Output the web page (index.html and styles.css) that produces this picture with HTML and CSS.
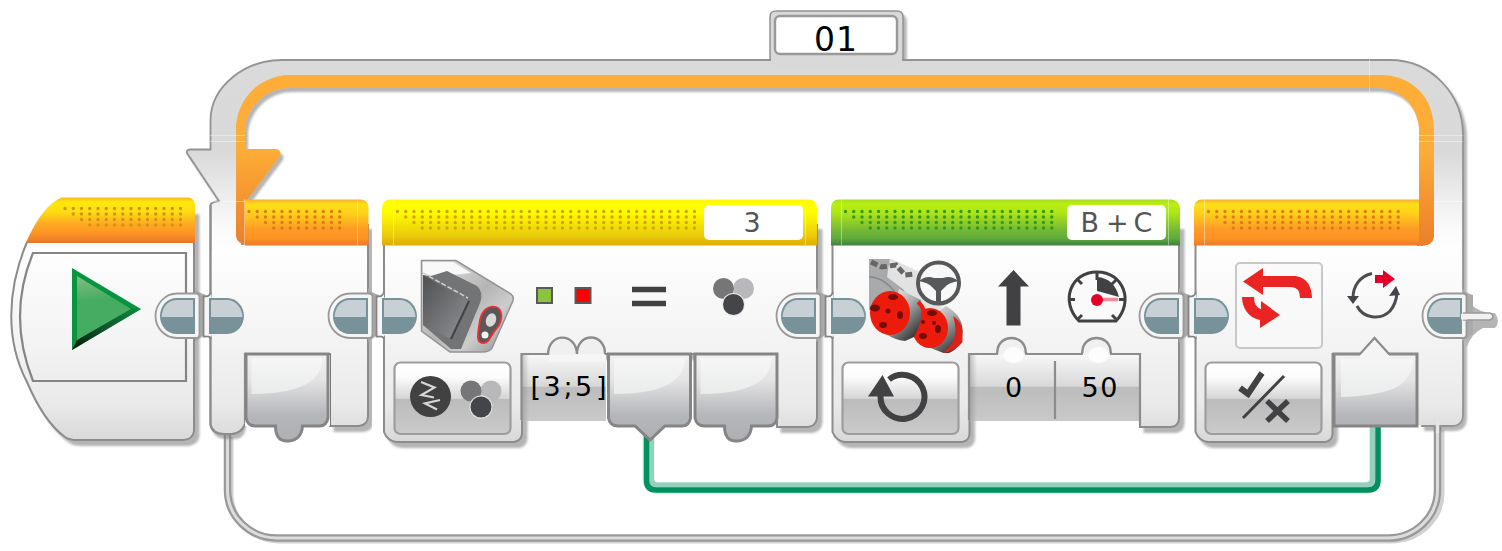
FILE: index.html
```
<!DOCTYPE html>
<html lang="en">
<head>
<meta charset="utf-8">
<title>Loop program</title>
<link rel="stylesheet" href="styles.css">
</head>
<body>
<main class="program">
<svg class="canvas" viewBox="0 0 1502 551" width="1502" height="551">
<defs>
  <linearGradient id="body" gradientUnits="userSpaceOnUse" x1="0" y1="245" x2="0" y2="442"><stop offset="0" stop-color="#fff"/><stop offset=".5" stop-color="#f3f3f3"/><stop offset=".8" stop-color="#eaeaea"/><stop offset="1" stop-color="#d8d8d8"/></linearGradient>
  <linearGradient id="strip" gradientUnits="userSpaceOnUse" x1="0" y1="60" x2="0" y2="440"><stop offset="0" stop-color="#dadada"/><stop offset=".24" stop-color="#d9d9d9"/><stop offset=".44" stop-color="#fafafa"/><stop offset=".52" stop-color="#fff"/><stop offset=".75" stop-color="#f2f2f2"/><stop offset="1" stop-color="#dadada"/></linearGradient>
  <linearGradient id="orange" x2="0" y2="1"><stop offset="0" stop-color="#fdab2d"/><stop offset=".1" stop-color="#fee017"/><stop offset=".3" stop-color="#fed01a"/><stop offset=".65" stop-color="#fe9a26"/><stop offset=".85" stop-color="#fd9225"/><stop offset="1" stop-color="#e87a2c"/></linearGradient>
  <linearGradient id="start" x2="0" y2="1"><stop offset="0" stop-color="#fcb41c"/><stop offset=".1" stop-color="#ffe80c"/><stop offset=".3" stop-color="#fede13"/><stop offset=".6" stop-color="#fea624"/><stop offset=".8" stop-color="#fd9225"/><stop offset="1" stop-color="#e7762c"/></linearGradient>
  <linearGradient id="yellow" x2="0" y2="1"><stop offset="0" stop-color="#fff700"/><stop offset=".1" stop-color="#ff0"/><stop offset=".3" stop-color="#fffa00"/><stop offset=".8" stop-color="#e8c90b"/><stop offset="1" stop-color="#e0ab00"/></linearGradient>
  <linearGradient id="lime" x2="0" y2="1"><stop offset="0" stop-color="#a9dc1d"/><stop offset=".1" stop-color="#b8ef12"/><stop offset=".28" stop-color="#afe615"/><stop offset=".65" stop-color="#77bb35"/><stop offset=".85" stop-color="#5eaa3c"/><stop offset="1" stop-color="#417f3f"/></linearGradient>
  <linearGradient id="track" gradientUnits="userSpaceOnUse" x1="0" y1="75" x2="0" y2="245"><stop offset="0" stop-color="#fdad38"/><stop offset=".45" stop-color="#fdac37"/><stop offset=".75" stop-color="#f3932f"/><stop offset="1" stop-color="#eb7f2c"/></linearGradient>
  <linearGradient id="btn" x2="0" y2="1"><stop offset="0" stop-color="#fff"/><stop offset=".2" stop-color="#fcfcfc"/><stop offset=".5" stop-color="#d6d6d6"/><stop offset=".52" stop-color="#bbb"/><stop offset="1" stop-color="#cbcbcb"/></linearGradient>
  <linearGradient id="val" x2="0" y2="1"><stop offset="0" stop-color="#f8f8f8"/><stop offset=".48" stop-color="#d8d8d8"/><stop offset=".5" stop-color="#bcbcbc"/><stop offset="1" stop-color="#c9c9c9"/></linearGradient>
  <linearGradient id="edge"><stop offset="0" stop-color="#777" stop-opacity=".4"/><stop offset="1" stop-color="#777" stop-opacity="0"/></linearGradient>
  <linearGradient id="port" gradientUnits="userSpaceOnUse" x1="0" y1="353" x2="0" y2="442"><stop offset="0" stop-color="#f2f2f2"/><stop offset=".3" stop-color="#e4e4e4"/><stop offset=".7" stop-color="#b5b6ba"/><stop offset="1" stop-color="#aeafb3"/></linearGradient>
  <linearGradient id="gloss" x2="0" y2="1"><stop offset="0" stop-color="#f6f6f6"/><stop offset="1" stop-color="#eaebeb"/></linearGradient>
  <linearGradient id="face" x2="1" y2="1"><stop offset="0" stop-color="#4f5052"/><stop offset="1" stop-color="#929396"/></linearGradient>
  <linearGradient id="shell" x2="1" y2="1"><stop offset="0" stop-color="#e8e8e8"/><stop offset=".5" stop-color="#b5b5b5"/><stop offset=".7" stop-color="#ccc"/><stop offset="1" stop-color="#8b8b8b"/></linearGradient>
  <linearGradient id="metal" x2=".7" y2="1"><stop offset="0" stop-color="#fafafa"/><stop offset=".5" stop-color="#aaa"/><stop offset="1" stop-color="#333"/></linearGradient>
  <linearGradient id="go" x1=".1" x2=".2" y2="1"><stop offset="0" stop-color="#7fbe80"/><stop offset=".4" stop-color="#46ac61"/><stop offset="1" stop-color="#44ac62"/></linearGradient>
  <linearGradient id="goEdge" gradientUnits="userSpaceOnUse" x1="140" y1="309" x2="72" y2="350"><stop offset="0" stop-color="#0a8c3c"/><stop offset=".5" stop-color="#12552b"/><stop offset="1" stop-color="#061c0d"/></linearGradient>
  <filter id="shadow" x="-5%" y="-5%" width="112%" height="112%"><feDropShadow dx="4.500" dy="5" stdDeviation=".9" flood-color="#777" flood-opacity=".55"/></filter>
  <filter id="trackShadow" filterUnits="userSpaceOnUse" x="160" y="0" width="1342" height="551"><feDropShadow dx="3" dy="4" stdDeviation=".8" flood-color="#777" flood-opacity=".55"/></filter>
  <clipPath id="motorClip"><rect x="869" y="259" width="93.500" height="94"/></clipPath>

  <g id="outlet">
    <path d="M40 -5Q43 0 51 2V40Q46 45 40 49Z" fill="#aaa"/>
    <path class="socket" d="M22 .5H41Q44.500 .5 44.500 4V41Q44.500 45 41 45H22C10 45 .5 35 .5 23S10 .5 22 .5Z"/>
    <path d="M22 5H40V41H22C12 41 5 33 5 23S12 5 22 5Z" fill="#779299"/>
    <path d="M22 7H38V24H6.500C7 14 13 7 22 7Z" fill="#c6d0d5"/>
  </g>
  <g id="inlet">
    <path class="socket inlet-edge" d="M9 -1Q8 3 4 3.500H1.500V43.500H4Q8 43 9 46" />
    <rect x="3" y="4.500" width="9" height="38" fill="#f5f5f5"/>
    <path d="M7 5H25C35 5 42 14 42 23S35 41 25 41H7Z" fill="#779299"/>
    <path d="M9 7H25C34 7 40 15 40.500 24H9Z" fill="#c6d0d5"/>
  </g>
  <g id="outRound">
    <path class="port" d="M2.500 354H84.500V418Q83 426 76 426H59Q58 440 45 441T32 426H12Q4 426 2.500 418Z"/>
    <path class="gloss" d="M8 358H79Q79 376 61 385Q43 394 8 394Z"/>
  </g>
  <g id="outPoint">
    <path class="port" d="M2.500 354H84.500V418Q83 426 76 426H59L44 440L29 426H12Q4 426 2.500 418Z"/>
    <path class="gloss" d="M8 358H79Q79 376 61 385Q43 394 8 394Z"/>
  </g>
  <g id="bump"><path class="bump" d="M-15 354.500Q-14 353 -14 350C-12 334 12 334 14 350Q14 353 15 354.500"/><ellipse cx="2" cy="355" rx="10" ry="8" fill="#fff" opacity=".8"/></g>
  <g id="colors"><circle cx="31" cy="11" r="10.500" fill="#b8b8ba"/><circle cx="11" cy="11" r="10.500" fill="#767678"/><circle cx="21" cy="27" r="11.500" fill="#e8e8e8"/><circle cx="21" cy="27" r="10.500" fill="#444548"/></g>
</defs>

<!-- return line and data wire -->
<path class="return-shadow" d="M231 437V493A49 48 0 0 0 280 541H1391A51 48 0 0 0 1442 493V430"/>
<path class="return-edge" d="M227.500 434V490A49.500 48 0 0 0 277 538H1388A49.500 48 0 0 0 1437.500 490V426"/>
<path class="return-core" d="M227.500 434V490A49.500 48 0 0 0 277 538H1388A49.500 48 0 0 0 1437.500 490V426"/>
<path class="wire-halo" d="M648.500 430V478Q648.500 488 658.500 488H1364Q1375 488 1375 478V427"/>
<path class="wire-light" d="M651.500 430V479Q651.500 485 658 485H1366Q1372.500 485 1372.500 479V427"/>
<path class="wire-dark" d="M646.500 430V480Q646.500 490 656 490H1368Q1378 490 1378 480V427"/>

<!-- start block -->
<g filter="url(#shadow)">
  <path class="block" d="M27 242C6 292 6 342 27 382Q44 422 65 437Q69 440 77 440H184Q193 439 194 431V210H60Z"/>
</g>
<path class="screen" d="M33 253H186V381H33Q7 316 33 253Z"/>
<path d="M26 243C36 219 49 202 62 197.500H188Q195 198 195 205V243Z" fill="url(#start)"/>
<path d="M72 268L141 309L72 350Z" fill="#0b9440"/><path d="M72 350L141 309L129 308L77 340Z" fill="url(#goEdge)"/><path d="M77 276L131 309L77 340Z" fill="url(#go)"/>
<g class="dots start-dots"><path d="M65 208.500H182"/><path d="M73.250 214H182"/><path d="M81.500 219.500H182"/><path d="M89.750 225H182"/></g>

<!-- loop frame -->
<g filter="url(#trackShadow)">
  <path d="M770 61V17Q770 11 776 11H897Q903 11 903 17V61Z" fill="#d9d9d9" stroke="#929292" stroke-width="1.500"/>
  <path class="frame" d="M210.500 205Q211 202 219 201L187 153Q186 150 190 149.500H210.500V120C211 86 245 60 282 60H1390C1432 60 1463 95 1463 135V416Q1462 426 1452 426H1422V128C1420 103 1401 83 1376 83H290C262 83 242 108 242 130V424Q240 434 233 434H224Q212 434 210.500 425Z"/>
  <path d="M236 250V125C239 95 263 75 290 75H1380C1412 75 1434 97 1434 130V236Q1433 245 1424 245H1419V128C1417 106 1401 88 1376 88H290C265 88 245 108 245 132V149H276Q282 150 280 156L247 200V245Q237 244 236 236Z" fill="url(#track)"/>
</g>
<path d="M771 58H902V67H771Z" fill="#d9d9d9"/>
<rect class="name-box" x="775" y="16" width="122" height="38" rx="5"/>
<path class="seam" d="M210 135.500H245M210 141.500H245M1419 135.500H1463M1419 141.500H1463M210 201.500H245M1419 201.500H1463M1369.500 59V92"/>

<!-- loop entry -->
<g filter="url(#shadow)"><path class="block" d="M330 353V426H359Q368 425 368 416V225H320V353Z"/></g>
<path d="M237 245H366V353H329V425H245V353H237Z" fill="url(#body)"/>
<path d="M330 354V426" class="port-line"/>
<path d="M245 199.500H361Q368 200 368.500 207V245.500H245Z" fill="url(#orange)"/>
<path class="seam" d="M244.500 199V245M357.500 199V245"/>
<path d="M211.500 250H244V424Q240 433 233 433H224Q213 433 211.500 425Z" fill="url(#body)"/>
<path class="outline" d="M210.500 205V425Q213 434 224 434H232Q242 433 245 424V353"/>
<path d="M245 355H330V426H245Z" fill="#fff"/>
<use href="#outRound" x="243.500"/>
<g class="dots orange-dots"><path d="M249 211.500H345"/><path d="M257.250 217H345"/><path d="M265.500 222.500H345"/><path d="M273.750 228H345"/></g>

<!-- compare block -->
<g filter="url(#shadow)"><path class="block" d="M384 230V432Q387 441 397 442H514Q521 441 522 434V354H777V427H808Q816 426 817 418V225Z"/></g>
<path d="M382 245.500V208Q382 199.500 391 199.500H809Q817 200 817 208V245.500Z" fill="url(#yellow)"/>
<g class="dots yellow-dots"><path d="M397.500 211.500H695"/><path d="M405.750 217H695"/><path d="M414 222.500H695"/><path d="M422.250 228H695"/></g>
<path class="seam" d="M393.500 199V245M805.500 199V245"/>
<rect x="704" y="205" width="99" height="35" rx="5" fill="#fff"/>
<rect x="522" y="354" width="84" height="67" fill="url(#val)"/><rect x="522" y="354" width="7" height="67" fill="url(#edge)"/>
<path class="outline" d="M521.500 420V354H549M604 354H607"/>
<path d="M549 362Q549 338 563 338T577 350Q578 338 592 338T605 362Z" fill="#f6f6f6"/>
<path class="bump" d="M548 355C548 332 576 332 577 354C577 332 605 332 605 354"/>
<use href="#outPoint" x="606"/><use href="#outRound" x="692.500"/>
<g>
  <path d="M421.500 260.500H456L511 294Q515 297 512 303L492 348Q490 352 482 352H450L421.500 331Z" fill="url(#shell)" stroke="#929292" stroke-width="1.500"/>
  <path d="M423 262H453L471 273L444 276L423 275Z" fill="#f8f8f8"/>
  <path d="M431 276L447 271L477 286Q484 292 480 303L461 349H451L423 325V275Z" fill="#737476"/>
  <path d="M423 275L469 301L451 339L423 325Z" fill="url(#face)"/>
  <path d="M469 301L451 339" stroke="#414244" stroke-width="2"/>
  <path d="M423 273L468 298" stroke="#d0d0d0" stroke-width="1.500" stroke-dasharray="5 2"/>
  <path d="M480 320C482 310 489 305 496 307C503 309 503 321 497 328C490 336 490 342 484 343C475 344 478 332 480 320Z" fill="#5c5659" stroke="#f03030" stroke-width="1.800"/>
  <ellipse cx="491" cy="320" rx="5" ry="7" fill="#d8d8d8" transform="rotate(20 491 320)"/><circle cx="485" cy="335" r="3.500" fill="#f4f4f4"/>
</g>
<rect class="button" x="394.500" y="362.500" width="116" height="71.500" rx="6"/>
<circle cx="430.500" cy="396.500" r="20.500" fill="#414141"/><path d="M421 382L434.500 387.500L421.500 395L434 397.500M440 400L425 403.500L437 409.500" fill="none" stroke="#d7d7d7" stroke-width="2.200"/>
<use href="#colors" x="460" y="380"/>
<rect x="537" y="288" width="15" height="15" fill="#8bc33f" stroke="#58595b" stroke-width="2"/>
<rect x="575.500" y="288" width="15" height="15" fill="#f00" stroke="#58595b" stroke-width="2"/>
<path d="M632 289.500H666M632 303.500H666" stroke="#414144" stroke-width="5.500"/>
<use href="#colors" x="712.500" y="277.500"/>

<!-- steering block -->
<g filter="url(#shadow)"><path class="block" d="M832.500 230V432Q836 441 845 442H962Q969 441 969.500 434V354H1140V427H1171Q1179 426 1179 418V225Z"/></g>
<path d="M831 245.500V208Q831 199.500 839 199.500H1171Q1179 200 1180 208V245.500Z" fill="url(#lime)"/>
<g class="dots green-dots"><path d="M845.500 211.500H1058"/><path d="M853.750 217H1058"/><path d="M862 222.500H1058"/><path d="M870.250 228H1058"/></g>
<path class="seam" d="M841.500 199V245M1168.500 199V245"/>
<rect x="1067" y="205" width="99" height="35" rx="5" fill="#fff"/>
<rect x="970" y="354" width="169" height="67" fill="url(#val)"/><rect x="970" y="354" width="7" height="67" fill="url(#edge)"/>
<path class="outline" d="M969 420V354H998M1025 354H1083M1110 354H1140V425M1055 361V419"/>
<use href="#bump" x="1011.500"/><use href="#bump" x="1096.500"/>
<g clip-path="url(#motorClip)">
  <path d="M869 259H890L930 285L914 315L869 310Z" fill="#a9aaac"/><path d="M869 277Q887 277 900 300" fill="none" stroke="#888" stroke-width="1.500"/>
  <path d="M890 258L932 278L942 308L922 318L903 289L887 277Z" fill="#e2e2e2"/>
  <path d="M871 262L882 267L896 265L905 275L914 274" fill="none" stroke="#666" stroke-width="5" stroke-dasharray="7 3"/>
  <path d="M920 323L946 306Q962 315 963 331Q961 350 946 354L923 345Z" fill="url(#metal)"/><path d="M953 316Q964 323 964 340Q957 351 943 353Q961 340 953 316Z" fill="#df2018"/>
  <ellipse cx="930" cy="328" rx="18" ry="20" fill="#ed1b0c"/>
  <path d="M899 289L921 300Q925 319 914 337L905 341Q895 340 886 334Z" fill="url(#metal)"/>
  <path d="M918 302Q928 310 921 326" fill="none" stroke="#ef1a0c" stroke-width="4"/>
  <ellipse cx="890" cy="313" rx="20" ry="22" fill="#ed1b0c"/>
  <g fill="#750b05"><ellipse cx="893" cy="297" rx="5" ry="3"/><ellipse cx="875" cy="308" rx="5" ry="3.500"/><ellipse cx="900" cy="315" rx="3" ry="4"/><circle cx="888" cy="311" r="2.500"/><ellipse cx="883" cy="325" rx="4" ry="3"/><ellipse cx="932" cy="313" rx="5" ry="3"/><circle cx="923" cy="322" r="2"/><circle cx="934" cy="323" r="2"/><ellipse cx="938" cy="329" rx="3" ry="4"/><ellipse cx="923" cy="336" rx="4" ry="3"/></g>
  <circle cx="938.500" cy="283" r="20.500" fill="#f8f8f8" stroke="#57585a" stroke-width="4"/>
  <path d="M919 281Q926 275 934 278H943Q951 275 958 281Q948 283 945 287L941 291V303H936V291L932 287Q929 283 919 281Z" fill="#57585a"/>
</g>
<path d="M1013.500 270L1029 286.500H1020.500V325.500H1006.500V286.500H998Z" fill="#414144"/>
<g><path d="M1079 321C1060 302 1070 272 1097 272S1134 302 1116 321Z" fill="#fafafa" stroke="#414144" stroke-width="3"/><path d="M1097 272V280M1077 279L1082 284M1117 279L1112 284M1069 299.500H1075M1119 299.500H1126M1078 319L1082 315M1116 319L1112 315" stroke="#414144" stroke-width="3"/><path d="M1097 277Q1114 278 1119 297L1101 292L1097 291Z" fill="#414144"/><path d="M1099 299.500H1118" stroke="#ed8c98" stroke-width="3.500"/><circle cx="1097" cy="300" r="6" fill="#e4002b"/></g>
<rect class="button" x="842.500" y="362.500" width="116" height="71.500" rx="6"/>
<path d="M889 379.500A22 22 0 1 1 880.500 396" fill="none" stroke="#414144" stroke-width="6"/><path d="M882.500 375L894 396.500H868Z" fill="#414144"/>

<!-- loop exit -->
<g filter="url(#shadow)"><path class="block" d="M1195.500 230V432Q1199 441 1208 442H1325Q1332 441 1332.500 434V354H1418V240Z"/></g>
<path d="M1394 246H1462V416Q1461 425 1452 425H1418V354H1394Z" fill="url(#body)"/>
<path d="M1194 245.500V208Q1194 199.500 1202 199.500H1419V245.500Z" fill="url(#orange)"/>
<path d="M1419 199H1434V236Q1433 245 1424 245.500H1419Z" fill="url(#track)"/>
<path class="seam" d="M1204.500 199V245"/>
<g class="dots orange-dots"><path d="M1208.500 211.500H1400"/><path d="M1216.750 217H1400"/><path d="M1225 222.500H1400"/><path d="M1233.250 228H1400"/></g>
<rect x="1236" y="263" width="86" height="85" rx="4" fill="#f9f9f9" fill-opacity=".8" stroke="#c8c8c8" stroke-width="2"/>
<path d="M1243 281.500L1263 268V276H1293C1306 276 1312 286 1312 298H1300Q1300 287 1291 287H1263V295ZM1242 297H1254Q1254 307 1261 309V301L1280 315L1260 328V320C1248 318 1242 307 1242 297Z" fill="#ea2423"/>
<g fill="none" stroke="#4c4d50" stroke-width="3"><path d="M1372 273.500C1360 276 1353 286 1353 298"/><path d="M1357 306C1363 318 1380 321 1390 311Q1396 304 1397 293"/></g><path d="M1347 296H1359L1353 304ZM1389 296L1396 286L1400 295Z" fill="#444548"/><path d="M1375 275H1383V270L1395 279L1383 288V283H1375Z" fill="#e4002b"/>
<rect class="button" x="1205.500" y="362.500" width="116" height="71.500" rx="6"/>
<path d="M1240 388L1248 394L1262 373" fill="none" stroke="#414144" stroke-width="6"/><path d="M1284 376L1243 418" stroke="#414144" stroke-width="3"/><path d="M1267 401L1288 421M1288 401L1267 421" stroke="#414144" stroke-width="5.500"/>
<path class="port" d="M1334 354H1417V426H1334Z"/><path class="gloss" d="M1341 359H1413Q1413 379 1395 388Q1376 396 1341 397Z"/><path d="M1360 355L1374.500 338L1389 355V361H1360Z" fill="#f4f4f4"/><path class="outline" d="M1334 354H1360L1374.500 338L1389 354H1417"/>
<path d="M1437.500 421V433" stroke="#e5e5e5" stroke-width="3.500"/>

<!-- connectors -->
<use href="#outlet" x="155" y="293"/><use href="#inlet" x="202" y="293"/>
<use href="#outlet" x="328" y="293"/><use href="#inlet" x="375" y="293"/>
<use href="#outlet" x="776" y="293"/><use href="#inlet" x="824" y="293"/>
<use href="#outlet" x="1139" y="293"/><use href="#inlet" x="1187" y="293"/>
<path d="M1464 297Q1475 311 1488 313H1495Q1501 322 1495 328H1483Q1472 333 1466 348Z" fill="#b5b5b5"/>
<use href="#outlet" x="1422" y="293"/>
<path d="M1463 313H1490Q1493 314 1493 317Q1492 320 1489 320H1463" fill="#f1f1f1" stroke="#9b9b9b" stroke-width="1.500"/><path d="M1461 314H1467V319.500H1461Z" fill="#f1f1f1"/>

<!-- values -->
<g class="label">
  <text class="name" x="814" y="51" textLength="43">01</text>
  <text x="530.500 543.500 563.500 575 596" y="396">[3;5]</text>
  <text x="1005" y="397">0</text>
  <text x="1081.500" y="397" textLength="36">50</text>
  <text class="port-name" x="743.500" y="232">3</text>
  <text class="port-name" x="1080.500" y="232">B</text><text class="port-name" x="1106" y="232">+</text><text class="port-name" x="1133.500" y="232">C</text>
</g>
</svg>
</main>
</body>
</html>
```
FILE: styles.css
```
body { margin: 0; background: #fff; overflow: hidden; }
.program { width: 1502px; height: 551px; }
.canvas { display: block; }

.block { fill: url(#body); stroke: #8c8c8c; stroke-width: 2; }
.outline { fill: none; stroke: #8c8c8c; stroke-width: 2.2; }
.frame { fill: url(#strip); stroke: #939393; stroke-width: 1.8; }
.screen { fill: url(#body); stroke: #858585; stroke-width: 2.2; }
.seam { fill: none; stroke: #fff; stroke-opacity: .4; stroke-width: 1; }
.name-box { fill: #fff; stroke: #999; stroke-width: 2.4; }

.socket { fill: #f5f5f5; stroke: #999; stroke-width: 1.8; }
.inlet-edge { stroke: #858585; }
.port { fill: url(#port); stroke: #858585; stroke-width: 3; }
.port-line { stroke: #777; stroke-width: 2; }
.gloss { fill: url(#gloss); }
.bump { fill: #f0f0f0; stroke: #8c8c8c; stroke-width: 2.4; }
.button { fill: url(#btn); stroke: #9d9d9d; stroke-width: 2.2; }

.dots { fill: none; stroke-width: 3.4; stroke-linecap: round; stroke-dasharray: 0 8.25; }
.start-dots { stroke: #cf960c; }
.orange-dots { stroke: #dc7d18; }
.yellow-dots { stroke: #d0a409; }
.green-dots { stroke: #34991f; }

.return-shadow, .return-edge, .return-core, .wire-halo, .wire-light, .wire-dark { fill: none; }
.return-shadow { stroke: #d2d2d2; stroke-width: 5; }
.return-edge { stroke: #999; stroke-width: 7.5; }
.return-core { stroke: #dcdcdc; stroke-width: 3; }
.wire-halo { stroke: #d8eee7; stroke-width: 12; }
.wire-light { stroke: #96cfbd; stroke-width: 5; }
.wire-dark { stroke: #00915f; stroke-width: 5.5; }

.label { font-family: "DejaVu Sans", sans-serif; font-size: 27px; fill: #000; }
.name { font-size: 33px; }
.port-name { fill: #555; }
```
